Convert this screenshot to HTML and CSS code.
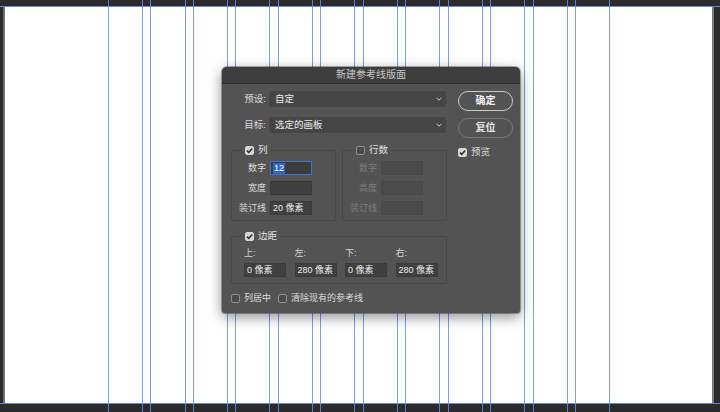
FILE: index.html
```html
<!DOCTYPE html>
<html lang="zh-CN">
<head>
<meta charset="utf-8">
<title>新建参考线版面</title>
<link rel="stylesheet" href="styles.css">
</head>
<body>
<div class="workspace">
  <div class="dark-top"></div>
  <div class="hguide"></div>
  <div class="artrow"><div class="artboard"></div></div>
  <div class="hguide"></div>
  <div class="dark-bottom"></div>
</div>

<div class="guides">
  <div class="gcol"></div><div class="gcol"></div><div class="gcol"></div><div class="gcol"></div>
  <div class="gcol"></div><div class="gcol"></div><div class="gcol"></div><div class="gcol"></div>
  <div class="gcol"></div><div class="gcol"></div><div class="gcol"></div><div class="gcol"></div>
</div>

<div class="dialog">
  <div class="titlebar">新建参考线版面</div>
  <div class="dbody">
    <div class="main">
      <div class="row">
        <span class="lbl">预设:</span>
        <div class="select"><span>自定</span>
          <svg class="chev" width="6" height="4" viewBox="0 0 6 4"><path d="M0.5 0.7 L3 3.2 L5.5 0.7" fill="none" stroke="#cfcfcf" stroke-width="1"/></svg>
        </div>
      </div>
      <div class="row">
        <span class="lbl">目标:</span>
        <div class="select"><span>选定的画板</span>
          <svg class="chev" width="6" height="4" viewBox="0 0 6 4"><path d="M0.5 0.7 L3 3.2 L5.5 0.7" fill="none" stroke="#cfcfcf" stroke-width="1"/></svg>
        </div>
      </div>

      <div class="groups">
        <fieldset class="group">
          <legend><span class="legend-in"><span class="cb on"><svg width="9" height="9" viewBox="0 0 9 9"><path d="M2 4.6 L3.8 6.4 L7.2 2.4" fill="none" stroke="#2f2f2f" stroke-width="1.6"/></svg></span>列</span></legend>
          <div class="field"><span class="flabel">数字</span><span class="input focus"><span class="selected">12</span></span></div>
          <div class="field"><span class="flabel">宽度</span><span class="input"></span></div>
          <div class="field"><span class="flabel">装订线</span><span class="input">20 像素</span></div>
        </fieldset>
        <fieldset class="group">
          <legend><span class="legend-in"><span class="cb"></span>行数</span></legend>
          <div class="field off"><span class="flabel">数字</span><span class="input"></span></div>
          <div class="field off"><span class="flabel">高度</span><span class="input"></span></div>
          <div class="field off"><span class="flabel">装订线</span><span class="input"></span></div>
        </fieldset>
      </div>

      <fieldset class="margins">
        <legend><span class="legend-in"><span class="cb on"><svg width="9" height="9" viewBox="0 0 9 9"><path d="M2 4.6 L3.8 6.4 L7.2 2.4" fill="none" stroke="#2f2f2f" stroke-width="1.6"/></svg></span>边距</span></legend>
        <div class="mgrid">
          <span class="mlabel">上:</span>
          <span class="mlabel">左:</span>
          <span class="mlabel">下:</span>
          <span class="mlabel">右:</span>
          <span class="input">0 像素</span>
          <span class="input">280 像素</span>
          <span class="input">0 像素</span>
          <span class="input">280 像素</span>
        </div>
      </fieldset>

      <div class="opts">
        <span class="check"><span class="cb"></span>列居中</span>
        <span class="check"><span class="cb"></span>清除现有的参考线</span>
      </div>
    </div>

    <div class="side">
      <button class="btn primary">确定</button>
      <button class="btn">复位</button>
      <span class="check preview"><span class="cb on"><svg width="9" height="9" viewBox="0 0 9 9"><path d="M2 4.6 L3.8 6.4 L7.2 2.4" fill="none" stroke="#2f2f2f" stroke-width="1.6"/></svg></span>预览</span>
    </div>
  </div>
</div>
</body>
</html>
```

FILE: styles.css
```css
* { box-sizing: border-box; }

html, body {
  margin: 0;
  padding: 0;
}

body {
  width: 720px;
  height: 412px;
  overflow: hidden;
  position: relative;
  background: #2b2b2b;
  font-family: "Liberation Sans", "Noto Sans CJK SC", sans-serif;
}

/* ---------- workspace / artboard ---------- */
.workspace {
  display: flex;
  flex-direction: column;
  height: 412px;
}

.dark-top { height: 6px; }
.dark-bottom { flex: 1; }

.hguide {
  height: 1px;
  background: #5c88e6;
}

.artrow {
  display: flex;
  height: 396px;
  padding-left: 3px;
}

.artboard {
  width: 711px;
  background: #ffffff;
  border-left: 2px solid #6e6e6e;
  border-right: 2px solid #7a7a7a;
}

/* column guides */
.guides {
  position: absolute;
  left: 108px;
  top: 0;
  width: 502px;
  height: 412px;
  display: flex;
  gap: 7.36px;
  pointer-events: none;
}

.gcol {
  flex: 1;
  border-left: 1px solid rgba(96, 142, 242, 0.85);
  border-right: 1px solid rgba(96, 142, 242, 0.85);
}

/* ---------- dialog ---------- */
.dialog {
  position: absolute;
  left: 222px;
  top: 67px;
  width: 298px;
  background: #535353;
  border-radius: 5px 5px 3px 3px;
  overflow: hidden;
  box-shadow: 0 0 0 1px rgba(0, 0, 0, 0.3), 0 4px 14px rgba(0, 0, 0, 0.45);
  color: #dadada;
  font-size: 9px;
  z-index: 2;
}

.titlebar {
  height: 17px;
  background: #3e3e3e;
  border-bottom: 1px solid #2d2d2d;
  text-align: center;
  font-size: 10px;
  line-height: 16px;
  color: #c6c6c6;
}

.dbody {
  display: flex;
  gap: 11px;
  padding: 7px 7px 9px 9px;
}

.main {
  width: 216px;
}

.row {
  display: flex;
  align-items: center;
  height: 16px;
}

.row + .row { margin-top: 10px; }

.lbl {
  width: 35px;
  margin-right: 3px;
  text-align: right;
  white-space: nowrap;
  line-height: 12px;
  font-size: 9.5px;
}

.select {
  flex: 1;
  height: 16px;
  margin-right: 1px;
  padding: 0 4px 0 6px;
  background: #454545;
  border-radius: 3px;
  display: flex;
  align-items: center;
  justify-content: space-between;
  color: #ececec;
  line-height: 12px;
  font-size: 9.5px;
}

.chev { display: block; }

/* groups */
.groups {
  display: flex;
  gap: 6px;
  margin-top: 11px;
}

fieldset {
  margin: 0;
  min-width: 0;
  border: 1px solid #484848;
  border-radius: 2px;
}

legend {
  margin-left: 10px;
  padding: 0 3px;
  height: 12px;
  line-height: 12px;
}

.legend-in {
  display: flex;
  align-items: center;
  gap: 4px;
  height: 12px;
  font-size: 9.5px;
  color: #e0e0e0;
}

.group {
  width: 105px;
  padding: 5px 0 5px 0;
}

.field {
  display: flex;
  align-items: center;
  height: 14px;
}

.field + .field { margin-top: 6px; }

.flabel {
  width: 34px;
  margin-right: 4px;
  text-align: right;
  white-space: nowrap;
  line-height: 12px;
}

.input {
  display: flex;
  align-items: center;
  width: 42px;
  height: 14px;
  padding-left: 2px;
  background: #404040;
  border: 1px solid #3a3a3a;
  color: #ececec;
  line-height: 12px;
  white-space: nowrap;
}

.input.focus {
  border-color: #3a73cf;
  background: #3c3c3c;
}

.selected {
  background: #2e66c6;
  color: #ffffff;
  padding: 0 1px;
  line-height: 11px;
}

.field.off .flabel { color: #7b7b7b; }
.field.off .input {
  background: #4b4b4b;
  border-color: #474747;
}

/* margins */
.margins {
  margin-top: 9px;
  padding: 5px 6px 6px 12px;
}

.margins legend {
  margin-left: -2px;
}

.mgrid {
  display: grid;
  grid-template-columns: repeat(4, 44px);
  column-gap: 6.5px;
  row-gap: 4px;
}

.mlabel {
  line-height: 12px;
  color: #d2d2d2;
}

/* checkboxes */
.cb {
  display: inline-block;
  width: 9px;
  height: 9px;
  border: 1px solid #8e8e8e;
  border-radius: 2px;
  background: #4a4a4a;
  flex: none;
  position: relative;
}

.cb.on {
  background: #d6d6d6;
  border-color: #d6d6d6;
}

.cb.on svg {
  display: block;
  margin: -1px 0 0 -1px;
}

.check {
  display: inline-flex;
  align-items: center;
  gap: 4px;
  line-height: 12px;
  height: 12px;
  white-space: nowrap;
}

.opts {
  display: flex;
  align-items: center;
  height: 12px;
  margin-top: 8px;
}

.opts .check + .check { margin-left: 7px; }

/* side */
.side {
  width: 55px;
  display: flex;
  flex-direction: column;
}

.btn {
  height: 20px;
  margin: 0;
  padding: 0;
  border-radius: 10px;
  border: 1px solid #7b7b7b;
  background: transparent;
  color: #e6e6e6;
  font-family: inherit;
  font-size: 10px;
  font-weight: bold;
  line-height: 18px;
}

.btn.primary {
  border: 1.5px solid #c9c9c9;
  color: #f0f0f0;
}

.btn + .btn { margin-top: 7px; }

.preview {
  margin-top: 8px;
  font-size: 9.5px;
}
```
